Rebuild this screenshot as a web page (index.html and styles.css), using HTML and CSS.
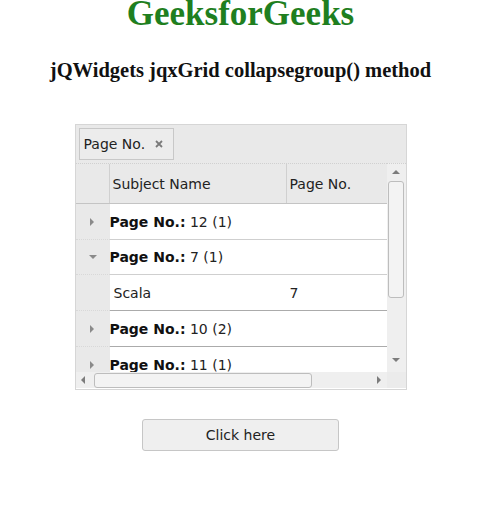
FILE: index.html
```html
<!DOCTYPE html>
<html>
<head>
<meta charset="utf-8">
<link rel="stylesheet" href="styles.css">
</head>
<body>
<div class="page">
  <h1 class="title">GeeksforGeeks</h1>
  <h3 class="subtitle">jQWidgets jqxGrid collapsegroup() method</h3>
  <div class="grid">
    <div class="group-panel">
      <div class="chip"><span>Page No.</span><svg class="chip-x" width="8" height="8" viewBox="0 0 8 8"><path d="M1 1L7 7M7 1L1 7" stroke="#7a7a7a" stroke-width="1.8" fill="none"/></svg></div>
    </div>
    <div class="grid-body">
      <div class="main">
        <div class="colheader">
          <div class="hcell indent"></div>
          <div class="hcell subj">Subject Name</div>
          <div class="hcell pno">Page No.</div>
        </div>
        <div class="rows">
          <div class="row grow h36">
            <div class="indent"><span class="tri-right"></span></div>
            <div class="gtext"><b>Page No.:</b> 12 (1)</div>
          </div>
          <div class="row grow h35">
            <div class="indent"><span class="tri-down"></span></div>
            <div class="gtext"><b>Page No.:</b> 7 (1)</div>
          </div>
          <div class="row drow h36 dark">
            <div class="indent"></div>
            <div class="dcell subj">Scala</div>
            <div class="dcell pno">7</div>
          </div>
          <div class="row grow h36 dark">
            <div class="indent"><span class="tri-right"></span></div>
            <div class="gtext"><b>Page No.:</b> 10 (2)</div>
          </div>
          <div class="row grow h36">
            <div class="indent"><span class="tri-right"></span></div>
            <div class="gtext"><b>Page No.:</b> 11 (1)</div>
          </div>
        </div>
      </div>
      <div class="vscroll">
        <span class="arr-up"></span>
        <div class="vthumb"></div>
        <span class="arr-down"></span>
      </div>
    </div>
    <div class="hbar">
      <div class="hscroll">
        <span class="arr-left"></span>
        <div class="hthumb"></div>
        <span class="arr-right"></span>
      </div>
      <div class="corner"></div>
    </div>
  </div>
  <button class="btn">Click here</button>
</div>
</body>
</html>
```

FILE: styles.css
```css
html, body {
  margin: 0;
  padding: 0;
  background: #ffffff;
}
.page {
  width: 465px;
  margin-left: 8px;
  text-align: center;
}
.title {
  margin: 0;
  font-family: "Liberation Serif", serif;
  font-size: 35px;
  line-height: 28px;
  font-weight: bold;
  color: #1f7f1f;
}
.subtitle {
  margin: 31px 0 0 0;
  font-family: "Liberation Serif", serif;
  font-size: 20.5px;
  line-height: 22px;
  font-weight: bold;
  color: #111;
}
.grid {
  width: 332px;
  height: 266px;
  box-sizing: border-box;
  margin: 43px auto 0 auto;
  border: 1px solid #d6d6d6;
  display: flex;
  flex-direction: column;
  text-align: left;
  font-family: "DejaVu Sans", Verdana, sans-serif;
  font-size: 14px;
  color: #222;
  background: #fff;
}
.group-panel {
  height: 38px;
  box-sizing: border-box;
  background: #e9e9e9;
  padding: 3px 0 0 3px;
}
.chip {
  width: 95px;
  height: 32px;
  box-sizing: border-box;
  border: 1px solid #c8c8c8;
  background: #ececec;
  display: flex;
  align-items: center;
  padding-left: 4px;
  gap: 10px;
}
.chip-x {
  display: block;
}
.grid-body {
  display: flex;
  height: 209px;
}
.main {
  width: 311px;
  display: flex;
  flex-direction: column;
}
.colheader {
  height: 41px;
  box-sizing: border-box;
  display: flex;
  background: #e9e9e9;
  border-top: 1px dotted #d0d0d0;
  border-bottom: 1px solid #c4c4c4;
}
.hcell {
  display: flex;
  align-items: center;
  box-sizing: border-box;
}
.colheader .indent {
  width: 34px;
  border-right: 1px solid #d0d0d0;
}
.colheader .subj {
  width: 177px;
  padding-left: 3px;
  border-right: 1px solid #d0d0d0;
}
.colheader .pno {
  flex: 1;
  padding-left: 3px;
}
.rows {
  flex: 1;
  overflow: hidden;
}
.row {
  display: flex;
  box-sizing: border-box;
  border-bottom: 1px solid #cfcfcf;
}
.row.dark {
  border-bottom-color: #ababab;
}
.h36 { height: 36px; }
.h35 { height: 35px; }
.row .indent {
  width: 34px;
  flex: none;
  background: #e9e9e9;
  display: flex;
  align-items: center;
  justify-content: center;
  margin-bottom: -1px;
  border-bottom: 1px dotted #d8d8d8;
}
.gtext {
  display: flex;
  align-items: center;
  padding-left: 0;
  white-space: pre;
}
.gtext b {
  font-weight: bold;
  color: #111;
}
.dcell {
  display: flex;
  align-items: center;
  box-sizing: border-box;
}
.drow .subj {
  width: 177px;
  padding-left: 4px;
}
.drow .pno {
  padding-left: 3px;
}
.tri-right {
  width: 0;
  height: 0;
  border-top: 4px solid transparent;
  border-bottom: 4px solid transparent;
  border-left: 4px solid #8a8a8a;
  margin-right: 2px;
}
.tri-down {
  width: 0;
  height: 0;
  border-left: 4px solid transparent;
  border-right: 4px solid transparent;
  border-top: 4px solid #8a8a8a;
}
.vscroll {
  width: 19px;
  background: #efefef;
  border-top: 1px dotted #d0d0d0;
  box-sizing: border-box;
  display: flex;
  flex-direction: column;
  align-items: center;
  padding-top: 6px;
}
.arr-up {
  width: 0;
  height: 0;
  border-left: 4px solid transparent;
  border-right: 4px solid transparent;
  border-bottom: 4px solid #7c7c7c;
}
.vthumb {
  margin-top: 7px;
  width: 16px;
  height: 117px;
  box-sizing: border-box;
  border: 1px solid #bdbdbd;
  border-radius: 3px;
  background: #f3f3f3;
}
.arr-down {
  margin-top: 60px;
  width: 0;
  height: 0;
  border-left: 4px solid transparent;
  border-right: 4px solid transparent;
  border-top: 4px solid #7c7c7c;
}
.hbar {
  display: flex;
  height: 16px;
}
.hscroll {
  width: 311px;
  background: #efefef;
  display: flex;
  align-items: center;
  padding-left: 5px;
  box-sizing: border-box;
}
.arr-left {
  width: 0;
  height: 0;
  border-top: 4px solid transparent;
  border-bottom: 4px solid transparent;
  border-right: 4px solid #7c7c7c;
}
.hthumb {
  margin-left: 9px;
  width: 218px;
  height: 15px;
  box-sizing: border-box;
  border: 1px solid #bdbdbd;
  border-radius: 3px;
  background: #f3f3f3;
}
.arr-right {
  margin-left: 65px;
  width: 0;
  height: 0;
  border-top: 4px solid transparent;
  border-bottom: 4px solid transparent;
  border-left: 4px solid #7c7c7c;
}
.corner {
  flex: 1;
  background: #ebebeb;
}
.btn {
  display: block;
  margin: 29px auto 0 auto;
  width: 197px;
  height: 32px;
  box-sizing: border-box;
  border: 1px solid #c6c6c6;
  border-radius: 3px;
  background: #efefef;
  font-family: "DejaVu Sans", Verdana, sans-serif;
  font-size: 14px;
  color: #222;
  padding: 0;
}
```
